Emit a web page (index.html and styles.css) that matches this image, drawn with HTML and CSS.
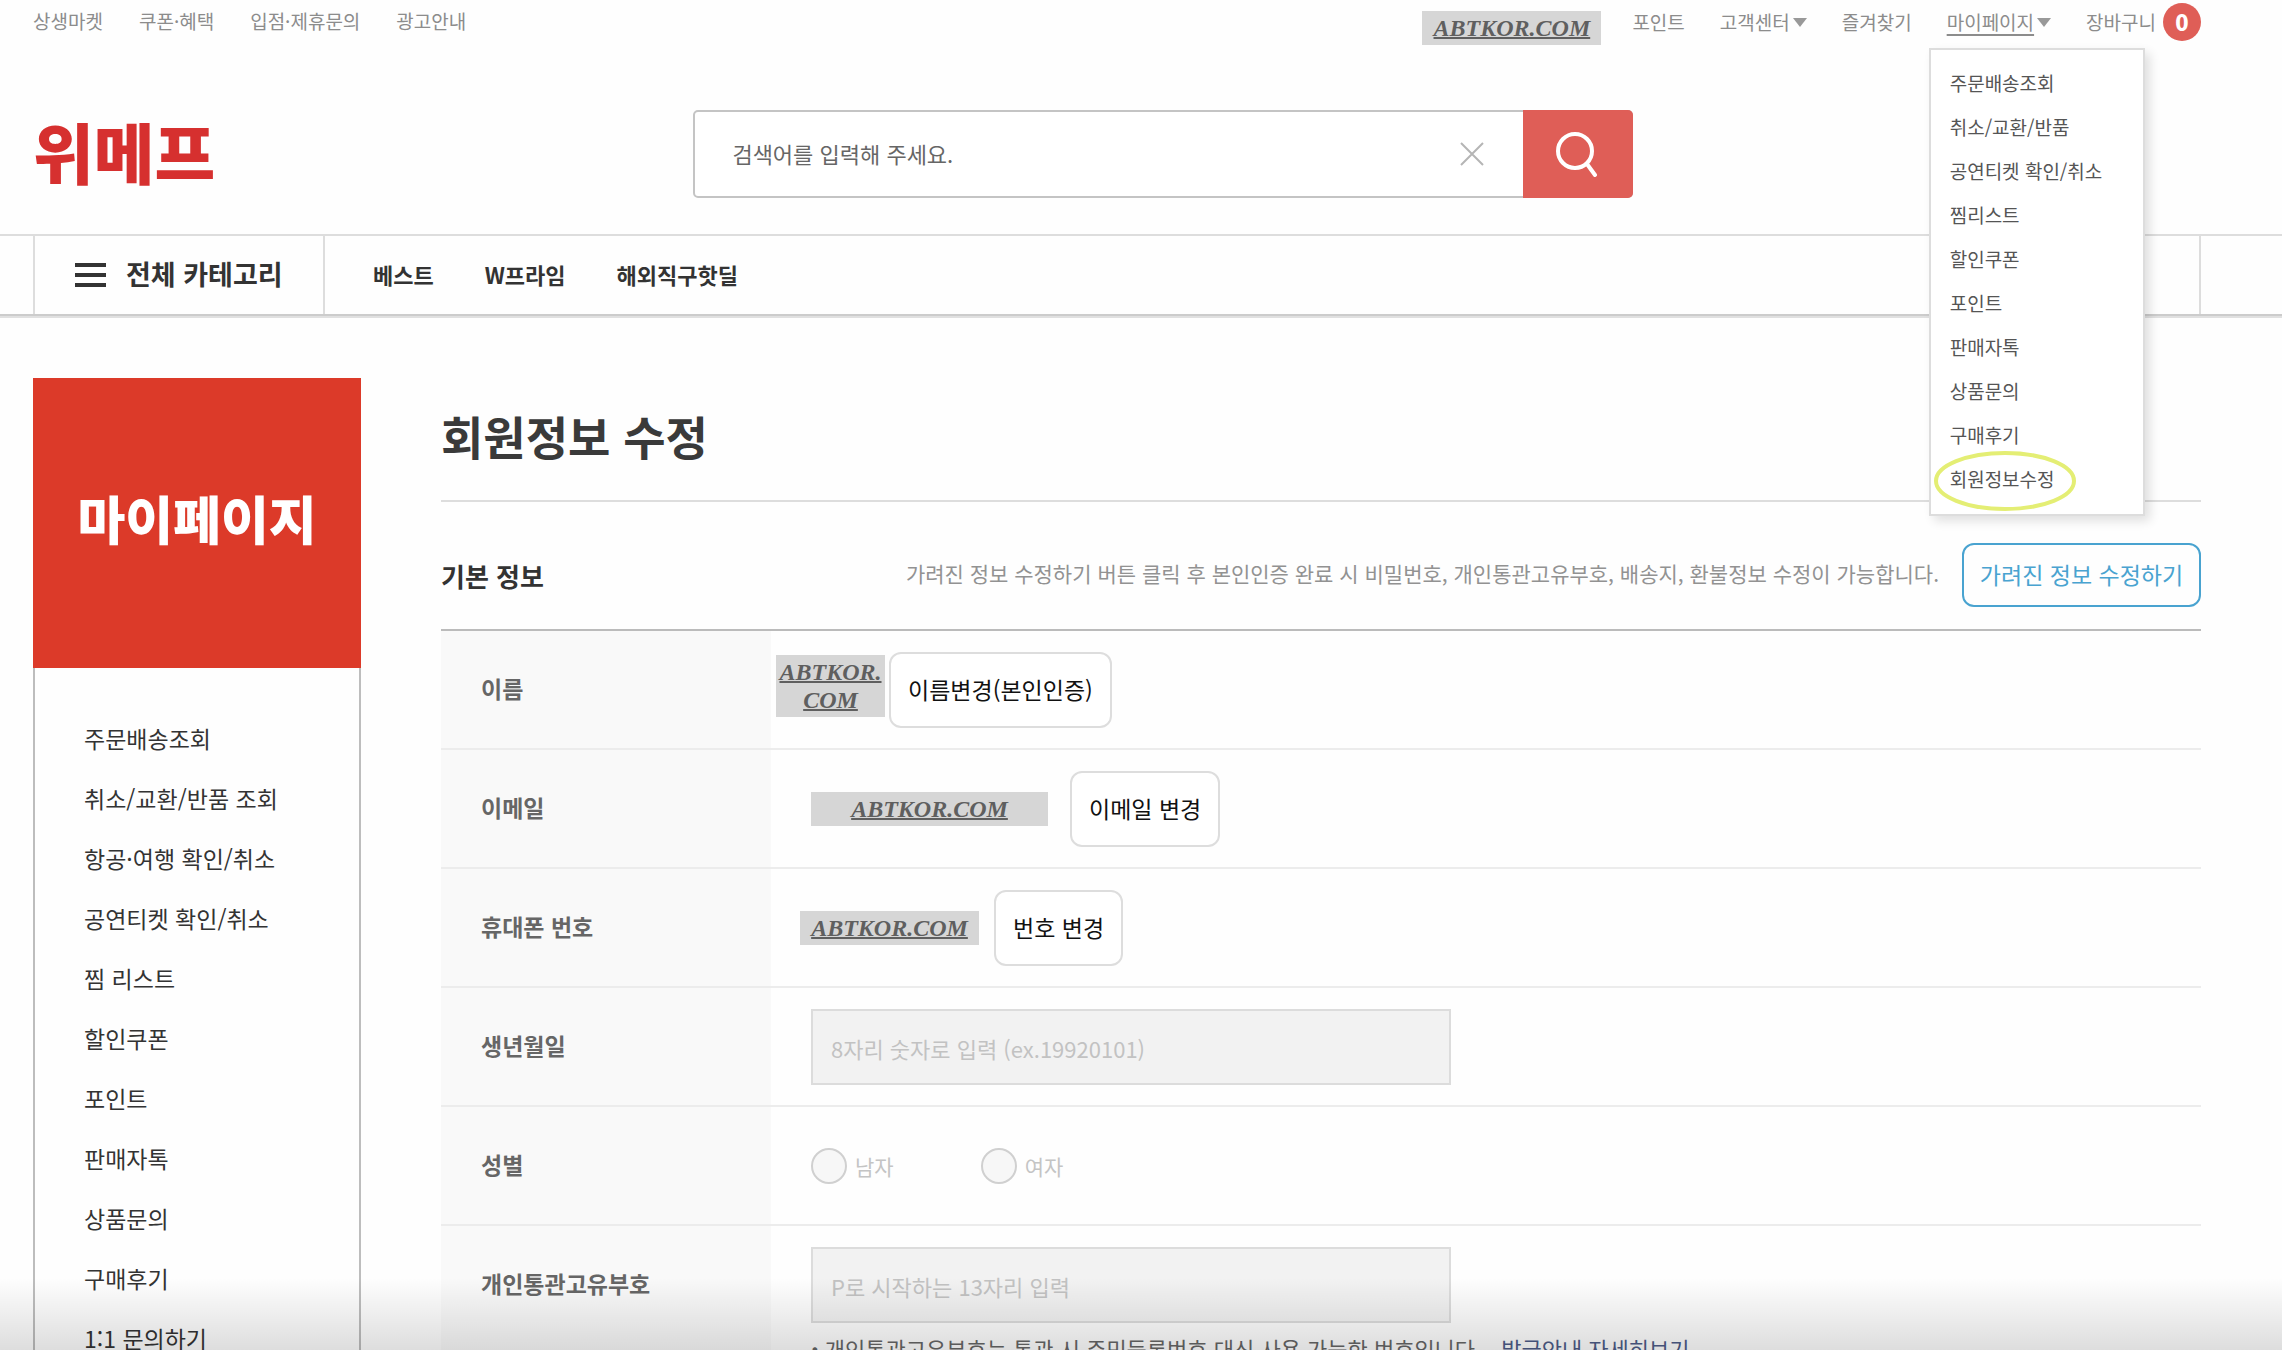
FILE: index.html
```html
<!DOCTYPE html>
<html lang="ko">
<head>
<meta charset="utf-8">
<meta name="viewport" content="width=device-width, initial-scale=1">
<title>위메프 - 회원정보 수정</title>
<link rel="stylesheet" href="styles.css">
</head>
<body>
<div class="page">
  <header>
    <div class="topbar">
      <nav class="service-links" aria-label="서비스">
        <a href="#">상생마켓</a>
        <a href="#">쿠폰·혜택</a>
        <a href="#">입점·제휴문의</a>
        <a href="#">광고안내</a>
      </nav>
      <div class="user-area">
        <span class="mask mask-user">ABTKOR.COM</span>
        <ul class="user-links">
          <li><a href="#">포인트</a></li>
          <li><a href="#">고객센터</a><svg class="caret" viewBox="0 0 14 9" aria-hidden="true"><path d="M0 0h14L7 9z"/></svg></li>
          <li><a href="#">즐겨찾기</a></li>
          <li class="has-menu"><a class="current" href="#">마이페이지</a><svg class="caret" viewBox="0 0 14 9" aria-hidden="true"><path d="M0 0h14L7 9z"/></svg>
            <ul class="menu">
              <li><a href="#">주문배송조회</a></li>
              <li><a href="#">취소/교환/반품</a></li>
              <li><a href="#">공연티켓 확인/취소</a></li>
              <li><a href="#">찜리스트</a></li>
              <li><a href="#">할인쿠폰</a></li>
              <li><a href="#">포인트</a></li>
              <li><a href="#">판매자톡</a></li>
              <li><a href="#">상품문의</a></li>
              <li><a href="#">구매후기</a></li>
              <li class="marked"><a href="#">회원정보수정</a><svg class="ring" viewBox="0 0 144 62" aria-hidden="true"><ellipse cx="72" cy="31" rx="69" ry="28"/></svg></li>
            </ul>
          </li>
          <li><a href="#">장바구니</a><span class="badge">0</span></li>
        </ul>
      </div>
    </div>
    <div class="masthead">
      <a class="logo" href="#">위메프</a>
      <form class="search" role="search">
        <input type="text" aria-label="검색어" placeholder="검색어를 입력해 주세요.">
        <button class="clear" type="button" aria-label="지우기"><svg viewBox="0 0 24 24"><path d="M1 1l22 22M23 1L1 23"/></svg></button>
        <button class="go" type="button" aria-label="검색"><svg viewBox="0 0 44 46"><circle cx="19" cy="20" r="17"/><path d="M31 33l8 11"/></svg></button>
      </form>
    </div>
    <div class="gnb">
      <div class="gnb-inner">
        <button class="all-categories" type="button"><svg viewBox="0 0 31 24" aria-hidden="true"><path d="M0 2h31M0 12h31M0 22h31"/></svg><span>전체 카테고리</span></button>
        <nav class="gnb-links" aria-label="주요 메뉴">
          <a href="#">베스트</a>
          <a href="#">W프라임</a>
          <a href="#">해외직구핫딜</a>
        </nav>
      </div>
    </div>
  </header>

  <div class="body">
    <aside class="side">
      <h2>마이페이지</h2>
      <ul>
        <li><a href="#">주문배송조회</a></li>
        <li><a href="#">취소/교환/반품 조회</a></li>
        <li><a href="#">항공·여행 확인/취소</a></li>
        <li><a href="#">공연티켓 확인/취소</a></li>
        <li><a href="#">찜 리스트</a></li>
        <li><a href="#">할인쿠폰</a></li>
        <li><a href="#">포인트</a></li>
        <li><a href="#">판매자톡</a></li>
        <li><a href="#">상품문의</a></li>
        <li><a href="#">구매후기</a></li>
        <li><a href="#">1:1 문의하기</a></li>
      </ul>
    </aside>

    <main>
      <h1>회원정보 수정</h1>
      <div class="section-head">
        <h3>기본 정보</h3>
        <p>가려진 정보 수정하기 버튼 클릭 후 본인인증 완료 시 비밀번호, 개인통관고유부호, 배송지, 환불정보 수정이 가능합니다.</p>
        <button class="edit-hidden" type="button">가려진 정보 수정하기</button>
      </div>
      <table class="info">
        <tbody>
          <tr>
            <th scope="row">이름</th>
            <td class="cell-name"><div class="line line-name"><span class="mask mask-name">ABTKOR.<br>COM</span><button class="change" type="button">이름변경(본인인증)</button></div></td>
          </tr>
          <tr>
            <th scope="row">이메일</th>
            <td><div class="line line-email"><span class="mask mask-email">ABTKOR.COM</span><button class="change" type="button">이메일 변경</button></div></td>
          </tr>
          <tr>
            <th scope="row">휴대폰 번호</th>
            <td class="cell-phone"><div class="line line-phone"><span class="mask mask-phone">ABTKOR.COM</span><button class="change" type="button">번호 변경</button></div></td>
          </tr>
          <tr>
            <th scope="row"><label for="birth">생년월일</label></th>
            <td><input class="field" id="birth" type="text" placeholder="8자리 숫자로 입력 (ex.19920101)" disabled></td>
          </tr>
          <tr>
            <th scope="row">성별</th>
            <td><div class="line line-gender">
              <label class="gender"><input type="radio" name="gender" disabled>남자</label>
              <label class="gender"><input type="radio" name="gender" disabled>여자</label>
            </div></td>
          </tr>
          <tr>
            <th scope="row"><label for="customs">개인통관고유부호</label></th>
            <td><input class="field" id="customs" type="text" placeholder="P로 시작하는 13자리 입력" disabled>
              <p class="note">개인통관고유부호는 통관 시 주민등록번호 대신 사용 가능한 번호입니다.<a href="#">발급안내 자세히보기</a></p></td>
          </tr>
        </tbody>
      </table>
    </main>
  </div>
  <div class="fade"></div>
</div>
</body>
</html>
```
FILE: styles.css
```css
* { box-sizing: border-box; margin: 0; padding: 0; }
body {
  font-family: "Noto Sans CJK KR", "Noto Sans", sans-serif;
  font-size: 22px;
  color: #333;
  background: #fefefe;
}
a { color: inherit; text-decoration: none; }
ul { list-style: none; }
button, input { font: inherit; color: inherit; background: none; border: 0; }
button { cursor: pointer; white-space: nowrap; }

.page { position: relative; height: 100vh; overflow: hidden; }

/* utility bar */
.topbar {
  display: flex;
  justify-content: space-between;
  height: 48px;
  padding: 0 81px 0 33px;
  font-size: 19px;
  line-height: 42px;
  color: #8c8c8c;
  white-space: nowrap;
}
.service-links { display: flex; gap: 36px; }
.user-area { display: flex; gap: 31px; }
.user-links { display: flex; gap: 35px; }
.user-links > li { display: flex; align-items: center; height: 44px; }
.caret { width: 14px; height: 9px; margin-left: 3px; fill: #999; }
.current { text-decoration: underline; text-underline-offset: 4px; text-decoration-thickness: 2px; }
.badge {
  width: 38px;
  height: 38px;
  margin-left: 7px;
  border-radius: 50%;
  background: #df5e57;
  color: #fff;
  font-size: 22px;
  font-weight: 900;
  line-height: 36px;
  text-align: center;
}
.has-menu { position: relative; }
.menu {
  position: absolute;
  top: 48px;
  left: -18px;
  z-index: 5;
  width: 216px;
  padding: 11px 19px 13px;
  border: 2px solid #ddd;
  background: #fff;
  box-shadow: 5px 5px 10px rgba(0, 0, 0, .12);
  color: #555;
}
.menu li { line-height: 44px; }
.marked { position: relative; }
.ring {
  position: absolute;
  top: -7px;
  left: -17px;
  width: 144px;
  height: 62px;
  fill: none;
  stroke: #e4ee74;
  stroke-width: 4;
}

/* redaction labels */
.mask {
  height: 34px;
  padding-top: 3px;
  background: #d6d6d6;
  color: #5f5f5f;
  font: italic bold 24px/28px "Liberation Serif", serif;
  text-align: center;
  text-decoration: underline;
  text-decoration-thickness: 2px;
}
.mask-user { width: 179px; margin-top: 11px; }
.mask-name { width: 109px; height: 62px; margin-bottom: 8px; }
.mask-email { width: 237px; }
.mask-phone { width: 179px; }

/* logo and search */
.masthead {
  display: grid;
  grid-template-columns: 30% minmax(0, 940px);
  align-items: center;
  height: 186px;
  padding: 26px 81px 0 33px;
  column-gap: 10px;
}
.logo { font-size: 66px; font-weight: 900; line-height: 80px; padding-bottom: 8px; color: #d6302f; }
.search {
  display: flex;
  align-items: center;
  height: 88px;
  border: 2px solid #c4c4c4;
  border-radius: 5px;
  background: #fff;
}
.search input { flex: 1; min-width: 0; height: 84px; padding: 0 0 2px 37px; outline: 0; }
.search input::placeholder { color: #666; opacity: 1; }
.clear { display: flex; padding: 0 39px; }
.clear svg { width: 24px; height: 24px; stroke: #b5b5b5; stroke-width: 2; fill: none; }
.go {
  display: flex;
  align-items: center;
  justify-content: center;
  width: 110px;
  height: 88px;
  margin-right: -2px;
  border-radius: 0 5px 5px 0;
  background: #df5e57;
}
.go svg { width: 44px; height: 46px; fill: none; stroke: #fff; stroke-width: 4; stroke-linecap: round; }

/* category bar */
.gnb {
  padding: 0 81px 0 33px;
  border-top: 2px solid #ddd;
  border-bottom: 2px solid #ccc;
  box-shadow: 0 2px 0 #e0e0e0;
}
.gnb-inner { display: flex; height: 78px; border: solid #ddd; border-width: 0 2px; }
.all-categories {
  display: flex;
  align-items: center;
  gap: 20px;
  width: 290px;
  padding-left: 40px;
  border-right: 2px solid #ddd;
  font-size: 27px;
  font-weight: 700;
}
.all-categories span { padding-bottom: 3px; }
.all-categories svg { width: 31px; height: 24px; stroke: #333; stroke-width: 4; }
.gnb-links { display: flex; align-items: center; gap: 51px; padding: 0 0 3px 48px; font-weight: 700; }

/* two-column body */
.body {
  display: grid;
  grid-template-columns: 328px minmax(0, 1fr);
  column-gap: 80px;
  padding: 62px 81px 0 33px;
}
.side h2 {
  height: 290px;
  background: #dc3a29;
  color: #fff;
  font-size: 52px;
  font-weight: 900;
  line-height: 280px;
  text-align: center;
}
.side ul { padding: 40px 0 0 49px; border: solid #bdbdbd; border-width: 0 2px; }
.side li { font-size: 23px; line-height: 60px; }

h1 {
  height: 124px;
  border-bottom: 2px solid #ddd;
  color: #3a3a3a;
  font-size: 46px;
  font-weight: 700;
  line-height: 114px;
}
.section-head {
  display: flex;
  align-items: center;
  height: 127px;
  padding-top: 40px;
  padding-bottom: 21px;
}
.section-head h3 { font-size: 26px; white-space: nowrap; }
.section-head p { flex: 1; padding: 0 23px 4px; font-size: 21px; color: #929292; text-align: right; }
.edit-hidden {
  width: 239px;
  height: 64px;
  padding-bottom: 2px;
  border: 2px solid #49a3d0;
  border-radius: 12px;
  color: #49a3d0;
  font-size: 23px;
}

.info { width: 100%; table-layout: fixed; border-collapse: collapse; border-top: 2px solid #bbb; }
.info tr { height: 119px; border-bottom: 2px solid #ececec; }
.info th {
  width: 330px;
  padding: 40px 0 0 40px;
  background: #f9f9f9;
  color: #666;
  font-size: 23px;
  line-height: 34px;
  text-align: left;
  vertical-align: top;
}
.info td { padding: 21px 0 0 40px; vertical-align: top; }
.info td.cell-name { padding-left: 5px; }
.info td.cell-phone { padding-left: 29px; }
.line { display: flex; align-items: center; height: 76px; }
.line-name { gap: 4px; }
.line-email { gap: 22px; }
.line-phone { gap: 15px; }
.line-gender { gap: 87px; }
.change {
  height: 76px;
  padding: 0 17px 2px;
  border: 2px solid #ddd;
  border-radius: 12px;
  background: #fff;
  color: #111;
  font-size: 23px;
}
.field {
  display: block;
  width: 640px;
  max-width: 100%;
  height: 76px;
  padding: 2px 18px 0;
  border: 2px solid #dcdcdc;
  background: #f2f2f2;
}
.field::placeholder { color: #c2c2c2; opacity: 1; }
.gender { display: flex; align-items: center; gap: 8px; font-size: 21px; color: #c4c4c4; }
.gender input {
  appearance: none;
  width: 36px;
  height: 36px;
  border: 2px solid #d0d0d0;
  border-radius: 50%;
  background: #f7f7f7;
}
.note { padding-top: 6px; line-height: 38px; color: #666; white-space: nowrap; }
.note::before { content: "·"; margin-right: 6px; font-weight: 900; }
.note a { margin-left: 20px; color: #4d5c88; }

.fade {
  position: absolute;
  inset: auto 0 0;
  z-index: 6;
  height: 72px;
  background: linear-gradient(rgba(0, 0, 0, 0), rgba(0, 0, 0, .13));
  pointer-events: none;
}
```
